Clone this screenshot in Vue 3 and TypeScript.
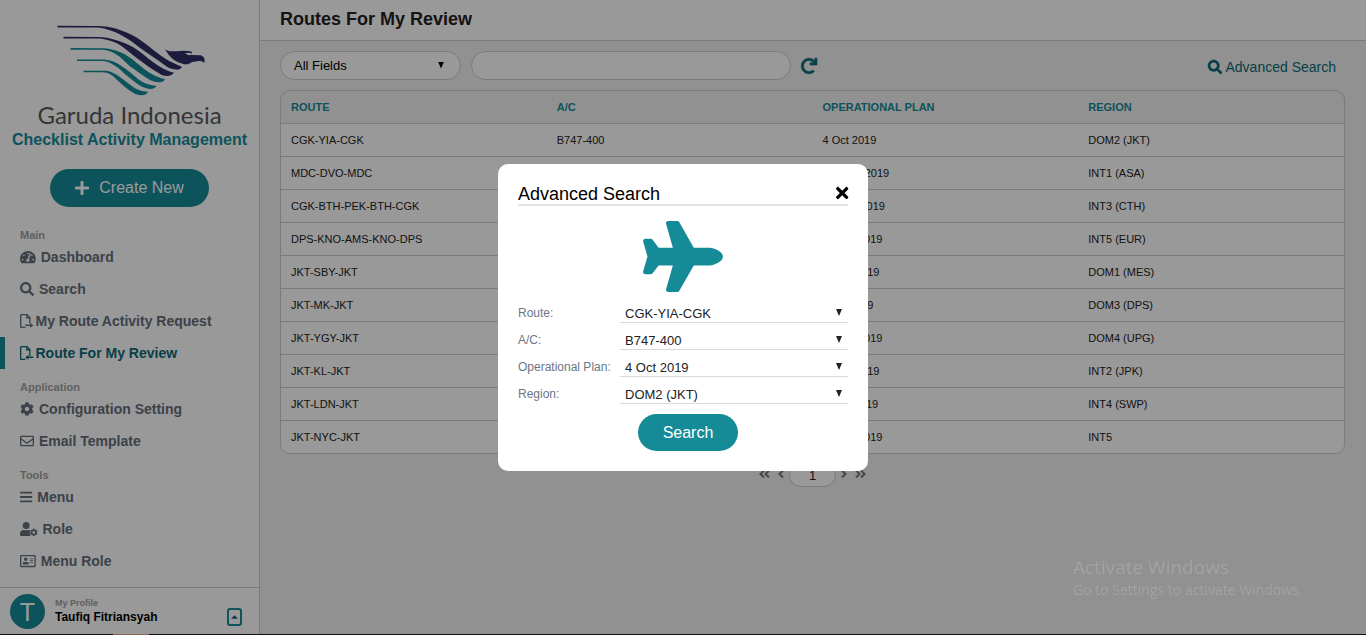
<script setup lang="ts">
import { ref } from 'vue'

interface Icon {
  box: string
  path: string
}

interface NavItem {
  label: string
  icon: string
  active?: boolean
}

interface NavGroup {
  title: string
  items: NavItem[]
}

interface RouteRow {
  route: string
  aircraft: string
  plan: string
  region: string
}

const icons: Record<string, Icon> = {
  plus: {
    box: '0 0 448 512',
    path: 'M416 208H272V64c0-17.67-14.33-32-32-32h-32c-17.67 0-32 14.33-32 32v144H32c-17.67 0-32 14.33-32 32v32c0 17.67 14.33 32 32 32h144v144c0 17.67 14.33 32 32 32h32c17.67 0 32-14.33 32-32V304h144c17.67 0 32-14.33 32-32v-32c0-17.67-14.33-32-32-32z',
  },
  gauge: {
    box: '0 0 576 512',
    path: 'M288 32C128.94 32 0 160.94 0 320c0 52.8 14.25 102.26 39.06 144.8 5.61 9.62 16.3 15.2 27.44 15.2h443c11.14 0 21.83-5.58 27.44-15.2C561.75 422.26 576 372.8 576 320c0-159.06-128.94-288-288-288zm0 64c14.71 0 26.58 10.13 30.32 23.65-1.11 2.26-2.64 4.23-3.45 6.67l-9.22 27.67c-5.13 3.49-10.97 6.01-17.64 6.01-17.67 0-32-14.33-32-32S270.33 96 288 96zM96 384c-17.67 0-32-14.33-32-32s14.33-32 32-32 32 14.33 32 32-14.33 32-32 32zm48-160c-17.67 0-32-14.33-32-32s14.33-32 32-32 32 14.33 32 32-14.33 32-32 32zm246.77-72.41l-61.33 184C343.13 347.33 352 364.54 352 384c0 11.72-3.38 22.55-8.88 32H232.88c-5.5-9.45-8.88-20.28-8.88-32 0-33.94 26.5-61.43 59.9-63.59l61.34-184.01c4.17-12.56 17.73-19.45 30.36-15.17 12.57 4.19 19.35 17.79 15.17 30.36zm14.66 57.2l15.52-46.55c3.47-1.29 7.13-2.23 11.05-2.23 17.67 0 32 14.33 32 32s-14.33 32-32 32c-11.38-.01-20.89-6.28-26.57-15.22zM480 384c-17.67 0-32-14.33-32-32s14.33-32 32-32 32 14.33 32 32-14.33 32-32 32z',
  },
  search: {
    box: '0 0 512 512',
    path: 'M505 442.7L405.3 343c-4.5-4.5-10.6-7-17-7H372c27.6-35.3 44-79.7 44-128C416 93.1 322.9 0 208 0S0 93.1 0 208s93.1 208 208 208c48.3 0 92.7-16.4 128-44v16.3c0 6.4 2.5 12.5 7 17l99.7 99.7c9.4 9.4 24.6 9.4 33.9 0l28.3-28.3c9.4-9.4 9.4-24.6.1-34zM208 336c-70.7 0-128-57.2-128-128 0-70.7 57.2-128 128-128 70.7 0 128 57.2 128 128 0 70.7-57.2 128-128 128z',
  },
  fileOut: {
    box: '0 0 384 512',
    path: 'M48 0h220l116 116v210h-48V160H224V48H48v416h150v48H48c-26 0-48-21-48-48V48C0 21 21 0 48 0zM272 60v52h52zM190 386h180v-66l120 96-120 84v-58H190z',
  },
  fileIn: {
    box: '0 0 384 512',
    path: 'M48 0h220l116 116v240h-48V160H224V48H48v416h150v48H48c-26 0-48-21-48-48V48C0 21 21 0 48 0zM272 60v52h52zM490 386H310v-66l-120 96 120 84v-58h180z',
  },
  cog: {
    box: '0 0 512 512',
    path: 'M487.4 315.7l-42.6-24.6c4.3-23.2 4.3-47 0-70.2l42.6-24.6c4.9-2.8 7.1-8.6 5.5-14-11.1-35.6-30-67.8-54.7-94.6-3.8-4.1-10-5.1-14.8-2.3L380.8 110c-17.9-15.4-38.5-27.3-60.8-35.1V25.8c0-5.6-3.9-10.5-9.4-11.7-36.7-8.2-74.3-7.8-109.2 0-5.5 1.2-9.4 6.1-9.4 11.7V75c-22.2 7.9-42.8 19.8-60.8 35.1L88.7 85.5c-4.9-2.8-11-1.9-14.8 2.3-24.7 26.7-43.6 58.9-54.7 94.6-1.7 5.4.6 11.2 5.5 14L67.3 221c-4.3 23.2-4.3 47 0 70.2l-42.6 24.6c-4.9 2.8-7.1 8.6-5.5 14 11.1 35.6 30 67.8 54.7 94.6 3.8 4.1 10 5.1 14.8 2.3l42.6-24.6c17.9 15.4 38.5 27.3 60.8 35.1v49.2c0 5.6 3.9 10.5 9.4 11.7 36.7 8.2 74.3 7.8 109.2 0 5.5-1.2 9.4-6.1 9.4-11.7v-49.2c22.2-7.9 42.8-19.8 60.8-35.1l42.6 24.6c4.9 2.8 11 1.9 14.8-2.3 24.7-26.7 43.6-58.9 54.7-94.6 1.5-5.5-.7-11.3-5.6-14.1zM256 336c-44.1 0-80-35.9-80-80s35.9-80 80-80 80 35.9 80 80-35.9 80-80 80z',
  },
  envelope: {
    box: '0 0 512 512',
    path: 'M464 64H48C21.49 64 0 85.49 0 112v288c0 26.51 21.49 48 48 48h416c26.51 0 48-21.49 48-48V112c0-26.51-21.49-48-48-48zm0 48v40.805c-22.422 18.259-58.168 46.651-134.587 106.49-16.841 13.247-50.201 45.072-73.413 44.701-23.208.375-56.579-31.459-73.413-44.701C106.18 199.465 70.425 171.067 48 152.805V112h416zM48 400V214.398c22.914 18.251 55.409 43.862 104.938 82.646 21.857 17.205 60.134 55.186 103.062 54.955 42.717.231 80.509-37.199 103.053-54.947 49.528-38.783 82.032-64.401 104.947-82.653V400H48z',
  },
  bars: {
    box: '0 0 448 512',
    path: 'M16 132h416c8.8 0 16-7.2 16-16V76c0-8.8-7.2-16-16-16H16C7.2 60 0 67.2 0 76v40c0 8.8 7.2 16 16 16zm0 160h416c8.8 0 16-7.2 16-16v-40c0-8.8-7.2-16-16-16H16c-8.8 0-16 7.2-16 16v40c0 8.8 7.2 16 16 16zm0 160h416c8.8 0 16-7.2 16-16v-40c0-8.8-7.2-16-16-16H16c-8.8 0-16 7.2-16 16v40c0 8.8 7.2 16 16 16z',
  },
  userCog: {
    box: '0 0 640 512',
    path: 'M224 256A128 128 0 1 0 224 0a128 128 0 0 0 0 256zM134 288h16c46 20 100 20 148 0h16c14 0 28 2 40 7-8 18-2 38 14 50-4 16-4 30 0 46-18 12-24 32-16 52 10 26 22 48 40 69H48c-26 0-48-22-48-48v-42c0-74 60-134 134-134zM610 404c4-16 4-30 0-46l28-16c-6-22-18-42-34-58l-28 16c-12-10-24-18-40-22v-32c-24-6-46-6-66 0v32c-16 4-28 12-40 22l-28-16c-16 16-28 36-34 58l28 16c-4 16-4 30 0 46l-28 16c6 22 18 42 34 58l28-16c12 10 24 18 40 22v28c24 6 46 6 66 0v-28c16-4 28-12 40-22l28 16c16-16 28-36 34-58zM503 430a49 49 0 1 1 0-98 49 49 0 0 1 0 98z',
  },
  idCard: {
    box: '0 0 576 512',
    path: 'M528 32H48C22 32 0 54 0 80v352c0 26 22 48 48 48h480c26 0 48-22 48-48V80c0-26-22-48-48-48zm0 400H48V80h480zM208 256a64 64 0 1 0 0-128 64 64 0 0 0 0 128zM118 384h180c12 0 22-9 22-19v-19c0-32-30-58-67-58-11 0-19 8-45 8s-35-8-45-8c-37 0-67 26-67 58v19c0 10 10 19 22 19zM360 320h112c4 0 8-4 8-8v-16c0-4-4-8-8-8H360c-4 0-8 4-8 8v16c0 4 4 8 8 8zm0-64h112c4 0 8-4 8-8v-16c0-4-4-8-8-8H360c-4 0-8 4-8 8v16c0 4 4 8 8 8zm0-64h112c4 0 8-4 8-8v-16c0-4-4-8-8-8H360c-4 0-8 4-8 8v16c0 4 4 8 8 8z',
  },
  redo: {
    box: '0 0 512 512',
    path: 'M500.33 0h-47.41a12 12 0 0 0-12 12.57l4 82.76A247.42 247.42 0 0 0 256 8C119.34 8 7.9 119.53 8 256.19 8.1 393.07 119.1 504 256 504a247.1 247.1 0 0 0 166.18-63.91 12 12 0 0 0 .48-17.43l-34-34a12 12 0 0 0-16.38-.55A176 176 0 1 1 402.1 157.8l-101.53-4.87a12 12 0 0 0-12.57 12v47.41a12 12 0 0 0 12 12h200.33a12 12 0 0 0 12-12V12a12 12 0 0 0-12-12z',
  },
  times: {
    box: '0 0 352 512',
    path: 'M242.72 256l100.07-100.07c12.28-12.28 12.28-32.19 0-44.48l-22.24-22.24c-12.28-12.28-32.19-12.28-44.48 0L176 189.28 75.93 89.21c-12.28-12.28-32.19-12.28-44.48 0L9.21 111.45c-12.28 12.28-12.28 32.19 0 44.48L109.28 256 9.21 356.07c-12.28 12.28-12.28 32.19 0 44.48l22.24 22.24c12.28 12.28 32.2 12.28 44.48 0L176 322.72l100.07 100.07c12.28 12.28 32.2 12.28 44.48 0l22.24-22.24c12.28-12.28 12.28-32.19 0-44.48L242.72 256z',
  },
  plane: {
    box: '0 0 576 512',
    path: 'M480 192H365.71L260.61 8.06A16.014 16.014 0 0 0 246.71 0h-65.5c-10.63 0-18.3 10.17-15.38 20.39L214.86 192H112l-43.2-57.6c-3.02-4.03-7.77-6.4-12.8-6.4H16.01C5.6 128-2.04 137.78.49 147.88L32 256 .49 364.12C-2.04 374.22 5.6 384 16.01 384H56c5.04 0 9.78-2.37 12.8-6.4L112 320h102.86l-49.03 171.6c-2.92 10.22 4.75 20.4 15.38 20.4h65.5c5.74 0 11.04-3.08 13.89-8.06L365.71 320H480c35.35 0 96-28.65 96-64s-60.65-64-96-64z',
  },
}

const groups: NavGroup[] = [
  {
    title: 'Main',
    items: [
      { label: 'Dashboard', icon: 'gauge' },
      { label: 'Search', icon: 'search' },
      { label: 'My Route Activity Request', icon: 'fileOut' },
      { label: 'Route For My Review', icon: 'fileIn', active: true },
    ],
  },
  {
    title: 'Application',
    items: [
      { label: 'Configuration Setting', icon: 'cog' },
      { label: 'Email Template', icon: 'envelope' },
    ],
  },
  {
    title: 'Tools',
    items: [
      { label: 'Menu', icon: 'bars' },
      { label: 'Role', icon: 'userCog' },
      { label: 'Menu Role', icon: 'idCard' },
    ],
  },
]

const rows: RouteRow[] = [
  { route: 'CGK-YIA-CGK', aircraft: 'B747-400', plan: '4 Oct 2019', region: 'DOM2 (JKT)' },
  { route: 'MDC-DVO-MDC', aircraft: 'B747-400', plan: '12 June 2019', region: 'INT1 (ASA)' },
  { route: 'CGK-BTH-PEK-BTH-CGK', aircraft: 'B747-400', plan: '15 Nov 2019', region: 'INT3 (CTH)' },
  { route: 'DPS-KNO-AMS-KNO-DPS', aircraft: 'B747-400', plan: '14 Oct 2019', region: 'INT5 (EUR)' },
  { route: 'JKT-SBY-JKT', aircraft: 'B747-400', plan: '10 Jul 2019', region: 'DOM1 (MES)' },
  { route: 'JKT-MK-JKT', aircraft: 'B747-400', plan: '6 Jul 2019', region: 'DOM3 (DPS)' },
  { route: 'JKT-YGY-JKT', aircraft: 'B747-400', plan: '17 Oct 2019', region: 'DOM4 (UPG)' },
  { route: 'JKT-KL-JKT', aircraft: 'B747-400', plan: '18 Jul 2019', region: 'INT2 (JPK)' },
  { route: 'JKT-LDN-JKT', aircraft: 'B747-400', plan: '8 Aug 2019', region: 'INT4 (SWP)' },
  { route: 'JKT-NYC-JKT', aircraft: 'B747-400', plan: '12 Oct 2019', region: 'INT5' },
]

const fields = ref([
  { id: 'f-route', label: 'Route:', value: 'CGK-YIA-CGK' },
  { id: 'f-ac', label: 'A/C:', value: 'B747-400' },
  { id: 'f-plan', label: 'Operational Plan:', value: '4 Oct 2019' },
  { id: 'f-region', label: 'Region:', value: 'DOM2 (JKT)' },
])

const keyword = ref('')
const modalOpen = ref(true)
</script>

<template>
  <div class="screen">
    <div class="app">
      <aside class="sidebar">
        <div class="brand">
          <svg class="brand-mark" viewBox="0 0 150 73" aria-hidden="true">
            <g fill="#2f2d64">
              <path d="M2.500 1.700L40 2C50 2 56 3 62 5C70 7.500 76 10 82 13.700C90 19 96 24 102 28.700C108 33 113 37 119 39.300L127 43C126 45 123 46 120.500 45.500C117 45 114 44 112 42.700C103 36 95 31 85.500 24.300C79 19 75 16 69 12.700C63 9 58 7 52 5.500C48 4 45 3.500 40 3.500H2.500z" />
              <path d="M8.500 12.700L42 13C49 13 55 14 60.500 16C67 18 73 20 79 23.700C86 28 92 34 99 38.700C106 44 112 47 119 48.700C117 51 115 52 112 52C109 52 106 51 104 49.300C96 45 89 39 82 34.300C75 29 69 23 62 19.300C55 16 48 14.500 42 14.500H8.500z" />
              <path d="M109 23C110 25.500 112 27 115 27.200H122C126 26.500 131 26.500 135.500 27.200C137 27.700 137.500 29 136.500 30L135.500 31L145.500 31.300C148 32 149.500 34 149.500 35V39C148 37.500 146 37 144 37L137 38C135 39.500 132 40.700 129 40.300C125 39 122 38 119 36C115 33 112 29 109 23z" />
            </g>
            <path d="M130 29.500c2-1 5-1 7 0l-1.500 1.500c-2 .5-4-.5-5.500-1.500z" fill="#fff" />
            <g fill="#168b98">
              <path d="M15.500 24L45.500 24.300C53 24 60 26 65.500 28.300C72 31 77 35 82 39.300C87 43 91 47 95.500 49.300C100 52 105 54 110 55.300C109 57.500 107 58.500 104 58.300C101 58.300 98 57.500 95.500 56.300C88 52 82 47 75.500 42.700C70 38 66 33 60.500 30C56 27 51 25.700 45.500 25.700H15.500z" />
              <path d="M22 35.400L49 35.600C54 36 58 37 62 39.300C68 42.500 74 47 79 51.700C82 54 85 57 89 58.700C93 60.500 97 61.500 101.500 61.700C100 64 98 65 96 64.900C93 65 90 64 87 62.700C80 59 75 54 69 49.300C65 45 61 42 57 40C54 38 51 37 47 37H22z" />
              <path d="M28.500 46.700H52C56 47.500 59 49 62 51C67 54 71 58 75.500 61C78 63 81 65 84 66C87 67 90 67.700 93 67.700C92 70 90 71.200 87 71.200C84 71.500 81 70.500 79 69.300C73 66 69 62 64 57.700C61 55 59 52.500 55.500 50.500C53 49 50 48.300 47 48.300H28.500z" />
            </g>
          </svg>
          <div class="brand-name">Garuda Indonesia</div>
          <div class="brand-sub">Checklist Activity Management</div>
        </div>

        <button class="create" type="button">
          <svg class="icon" :viewBox="icons.plus.box" aria-hidden="true"><path :d="icons.plus.path" /></svg>
          Create New
        </button>

        <nav class="nav">
          <section v-for="group in groups" :key="group.title" class="nav-group">
            <h2>{{ group.title }}</h2>
            <a
              v-for="item in group.items"
              :key="item.label"
              href="#"
              class="nav-item"
              :class="{ active: item.active }"
            >
              <svg class="icon" :viewBox="icons[item.icon].box" aria-hidden="true">
                <path :d="icons[item.icon].path" fill-rule="evenodd" />
              </svg>
              {{ item.label }}
            </a>
          </section>
        </nav>

        <div class="profile">
          <span class="avatar">T</span>
          <div class="who">
            <span class="who-label">My Profile</span>
            <span class="who-name">Taufiq Fitriansyah</span>
          </div>
          <button class="expand" type="button" aria-label="Open profile menu">
            <svg viewBox="0 0 8 4" aria-hidden="true"><path d="M0 4L4 0L8 4z" /></svg>
          </button>
        </div>
      </aside>

      <main class="main">
        <header class="topbar"><h1>Routes For My Review</h1></header>

        <div class="content">
          <div class="toolbar">
            <div class="picker pill">
              <select aria-label="Search field">
                <option>All Fields</option>
                <option>Route</option>
                <option>A/C</option>
                <option>Operational Plan</option>
                <option>Region</option>
              </select>
            </div>
            <input v-model="keyword" class="keyword" type="text" aria-label="Keyword" />
            <button class="refresh" type="button" aria-label="Refresh">
              <svg class="icon" :viewBox="icons.redo.box" aria-hidden="true"><path :d="icons.redo.path" /></svg>
            </button>
            <a href="#" class="advanced" @click.prevent="modalOpen = true">
              <svg class="icon" :viewBox="icons.search.box" aria-hidden="true"><path :d="icons.search.path" /></svg>
              Advanced Search
            </a>
          </div>

          <div class="table-frame">
            <table>
              <thead>
                <tr>
                  <th scope="col">ROUTE</th>
                  <th scope="col">A/C</th>
                  <th scope="col">OPERATIONAL PLAN</th>
                  <th scope="col">REGION</th>
                </tr>
              </thead>
              <tbody>
                <tr v-for="row in rows" :key="row.route">
                  <td>{{ row.route }}</td>
                  <td>{{ row.aircraft }}</td>
                  <td>{{ row.plan }}</td>
                  <td>{{ row.region }}</td>
                </tr>
              </tbody>
            </table>
          </div>

          <div class="pager">
            <button type="button" aria-label="First page">
              <svg width="11" height="8" viewBox="0 0 11 8"><path d="M5 0.500L1.500 4L5 7.500M10 0.500L6.500 4L10 7.500" /></svg>
            </button>
            <button type="button" aria-label="Previous page">
              <svg width="6" height="8" viewBox="0 0 6 8"><path d="M5 0.500L1.500 4L5 7.500" /></svg>
            </button>
            <input type="text" value="1" aria-label="Page" />
            <button type="button" aria-label="Next page">
              <svg width="6" height="8" viewBox="0 0 6 8"><path d="M1 0.500L4.500 4L1 7.500" /></svg>
            </button>
            <button type="button" aria-label="Last page">
              <svg width="11" height="8" viewBox="0 0 11 8"><path d="M1 0.500L4.500 4L1 7.500M6 0.500L9.500 4L6 7.500" /></svg>
            </button>
          </div>
        </div>
      </main>
    </div>

    <div v-if="modalOpen" class="overlay">
      <form class="modal" role="dialog" aria-labelledby="modal-title" @submit.prevent>
        <div class="modal-head">
          <h2 id="modal-title">Advanced Search</h2>
          <button type="button" aria-label="Close" @click="modalOpen = false">
            <svg class="icon" :viewBox="icons.times.box" aria-hidden="true"><path :d="icons.times.path" /></svg>
          </button>
        </div>
        <svg class="plane" :viewBox="icons.plane.box" aria-hidden="true"><path :d="icons.plane.path" /></svg>
        <div v-for="field in fields" :key="field.id" class="field">
          <label :for="field.id">{{ field.label }}</label>
          <div class="picker line">
            <select :id="field.id" v-model="field.value">
              <option>{{ field.value }}</option>
            </select>
          </div>
        </div>
        <button class="submit" type="submit">Search</button>
      </form>
    </div>

    <div class="watermark">
      <p class="wm-title">Activate Windows</p>
      <p>Go to Settings to activate Windows.</p>
    </div>

    <div class="taskbar"><span></span></div>
  </div>
</template>

<style>
body {
  margin: 0;
}
</style>

<style scoped>
.screen {
  --teal: #168b98;
  --teal-dark: #0d6a76;
  --line: #cdcdcd;
  display: flex;
  flex-direction: column;
  height: 100vh;
  overflow: hidden;
  font-family: "Liberation Sans", Arial, sans-serif;
  color: #222;
  background: #f2f2f2;
}
.screen *,
.screen *::before,
.screen *::after {
  box-sizing: border-box;
}
button,
input,
select {
  margin: 0;
  padding: 0;
  border: 0;
  background: none;
  font: inherit;
  color: inherit;
}
h1,
h2,
p {
  margin: 0;
}
a {
  text-decoration: none;
}
.icon {
  flex: none;
  height: 14px;
  fill: currentColor;
  overflow: visible;
}
.app {
  flex: 1;
  min-height: 0;
  display: flex;
}

/* Sidebar */
.sidebar {
  flex: none;
  width: 260px;
  display: flex;
  flex-direction: column;
  background: #fff;
  border-right: 1px solid var(--line);
}
.brand {
  padding-top: 24px;
  display: flex;
  flex-direction: column;
  align-items: center;
}
.brand-mark {
  width: 150px;
  height: 73px;
}
.brand-name {
  margin-top: 4px;
  font: 24px/28px Lato, "Open Sans", sans-serif;
  color: #58595b;
}
.brand-sub {
  font-size: 16px;
  line-height: 22px;
  font-weight: bold;
  color: var(--teal);
}
.create {
  align-self: center;
  flex: none;
  display: flex;
  align-items: center;
  justify-content: center;
  gap: 10px;
  width: 159px;
  height: 38px;
  margin: 18px 0 10px;
  border-radius: 19px;
  background: var(--teal);
  color: #fff;
  font-size: 16px;
}
.create .icon {
  height: 16px;
}
.nav {
  flex: 1;
}
.nav-group {
  padding-top: 12px;
}
.nav-group h2 {
  padding-left: 20px;
  font-size: 11px;
  line-height: 12px;
  color: #a0a0a0;
}
.nav-item {
  display: flex;
  align-items: center;
  gap: 5px;
  height: 32px;
  padding-left: 15px;
  border-left: 5px solid transparent;
  font-size: 14px;
  font-weight: bold;
  color: #656e7b;
}
.nav-item.active {
  border-left-color: var(--teal);
  color: var(--teal-dark);
}
.profile {
  display: flex;
  align-items: center;
  height: 47px;
  padding: 0 17px 0 10px;
  border-top: 1px solid var(--line);
}
.avatar {
  width: 35px;
  height: 35px;
  border-radius: 50%;
  background: var(--teal);
  color: #fff;
  font-size: 25px;
  line-height: 36px;
  text-align: center;
}
.who {
  flex: 1;
  display: flex;
  flex-direction: column;
  margin-left: 10px;
}
.who-label {
  font-size: 9px;
  line-height: 12px;
  font-weight: bold;
  color: #a0a0a0;
}
.who-name {
  font-size: 12px;
  line-height: 16px;
  font-weight: bold;
  color: #000;
}
.expand {
  display: flex;
  align-items: center;
  justify-content: center;
  align-self: flex-end;
  width: 15px;
  height: 18px;
  margin-bottom: 8px;
  border: 2px solid var(--teal);
  border-radius: 3px;
}
.expand svg {
  width: 7px;
  height: 4px;
  fill: var(--teal-dark);
}

/* Main area */
.main {
  flex: 1;
  min-width: 0;
}
.topbar {
  padding: 8px 20px;
  background: #fff;
  border-bottom: 1px solid var(--line);
}
.topbar h1 {
  padding-bottom: 2px;
  font-size: 18px;
  line-height: 22px;
}
.content {
  padding: 10px 21px 0 20px;
}
.toolbar {
  display: flex;
  align-items: center;
  gap: 10px;
  margin-bottom: 10px;
}
.picker {
  position: relative;
}
.picker select {
  display: block;
  width: 100%;
  appearance: none;
  font-size: 13px;
}
.picker::after {
  content: "";
  position: absolute;
  top: 50%;
  right: 6px;
  width: 6px;
  height: 7px;
  margin-top: -4px;
  background: #222;
  clip-path: polygon(0 0, 100% 0, 50% 100%);
  pointer-events: none;
}
.pill {
  width: 181px;
}
.pill select {
  height: 29px;
  padding: 0 13px;
  border: 1px solid var(--line);
  border-radius: 15px;
  background: #fff;
  color: #000;
}
.pill::after {
  right: 17px;
  background: #000;
}
.keyword {
  width: 320px;
  height: 29px;
  padding: 0 14px;
  border: 1px solid var(--line);
  border-radius: 15px;
  background: #fff;
  font-size: 13px;
}
.refresh {
  display: flex;
  color: var(--teal-dark);
}
.refresh .icon {
  height: 16px;
}
.refresh .icon,
.advanced .icon {
  stroke: currentColor;
  stroke-width: 20;
}
.advanced {
  display: flex;
  align-items: center;
  gap: 3px;
  margin-left: auto;
  padding: 3px 9px 0 0;
  font-size: 14px;
  color: var(--teal-dark);
}
.table-frame {
  overflow: hidden;
  border: 1px solid var(--line);
  border-radius: 10px;
}
table {
  width: 100%;
  table-layout: fixed;
  border-collapse: separate;
  border-spacing: 0;
  font-size: 11px;
}
th,
td {
  height: 33px;
  padding: 0 10px;
  text-align: left;
  border-bottom: 1px solid var(--line);
}
th {
  color: var(--teal);
}
td {
  background: #fff;
}
tbody tr:last-child td {
  height: 32px;
  border-bottom: 0;
}
.pager {
  display: flex;
  align-items: center;
  justify-content: center;
  gap: 4px;
  margin-top: 9px;
}
.pager button {
  display: flex;
  padding: 2px 2px 4px;
}
.pager svg {
  fill: none;
  stroke: #777;
  stroke-width: 2;
}
.pager input {
  width: 47px;
  height: 24px;
  margin: 0 -1px;
  border: 1px solid var(--line);
  border-radius: 12px;
  background: #fff;
  font-size: 13px;
  text-align: center;
}

/* Dialog */
.overlay {
  position: fixed;
  inset: 0;
  display: grid;
  place-items: center;
  background: rgba(0, 0, 0, 0.4);
}
.modal {
  display: flex;
  flex-direction: column;
  width: 370px;
  padding: 20px;
  border-radius: 10px;
  background: #fff;
}
.modal-head {
  display: flex;
  align-items: center;
  justify-content: space-between;
  height: 22px;
  border-bottom: 2px solid #e3e3e3;
}
.modal-head h2 {
  font-size: 18px;
  line-height: 20px;
  font-weight: normal;
  color: #000;
}
.modal-head button {
  display: flex;
  padding-bottom: 2px;
  color: #000;
}
.modal-head .icon {
  height: 18px;
}
.plane {
  align-self: center;
  width: 80px;
  height: 71px;
  margin: 15px 0 4px;
  fill: var(--teal);
}
.field {
  display: flex;
  height: 27px;
}
.field label {
  width: 102px;
  padding-top: 9px;
  font-size: 12px;
  line-height: 16px;
  color: #6b7785;
}
.line {
  flex: 1;
  border-bottom: 1px solid #d9d9d9;
}
.line select {
  height: 26px;
  padding: 9px 20px 0 5px;
  line-height: 17px;
}
.line::after {
  margin-top: 0;
}
.submit {
  align-self: center;
  width: 100px;
  height: 37px;
  margin: 10px 0 0 10px;
  border-radius: 19px;
  background: var(--teal);
  color: #fff;
  font-size: 16px;
}

/* Desktop layer */
.watermark {
  position: fixed;
  right: 57px;
  bottom: 35px;
  min-width: 236px;
  font: 14px/20px "Open Sans", "Noto Sans", sans-serif;
  color: #a2a2a2;
  pointer-events: none;
}
.wm-title {
  font-size: 19px;
  line-height: 26px;
}
.taskbar {
  position: relative;
  flex: none;
  height: 1px;
  padding-left: 113px;
  background: #111;
}
.taskbar span {
  display: block;
  width: 36px;
  height: 1px;
  background: #8a6552;
}
</style>
